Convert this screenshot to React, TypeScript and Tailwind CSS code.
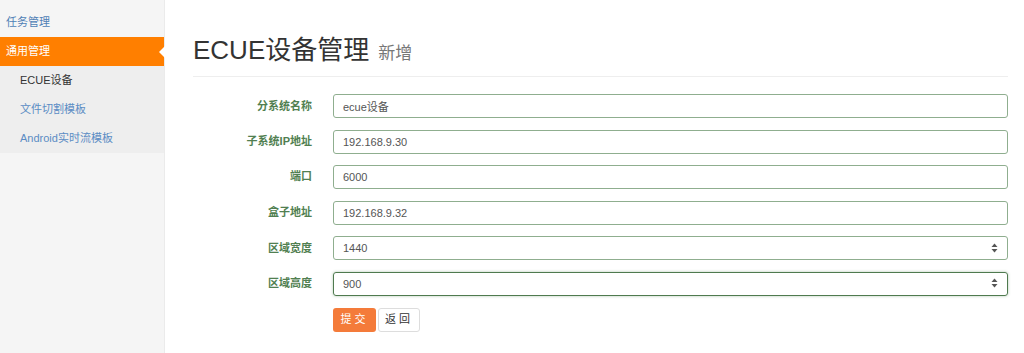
import { useState } from "react";

const font = { fontFamily: '"Liberation Sans", "Noto Sans CJK SC", sans-serif' };

type Field = { label: string; value: string; spin?: boolean; focus?: boolean };

const fields: Field[] = [
  { label: "分系统名称", value: "ecue设备" },
  { label: "子系统IP地址", value: "192.168.9.30" },
  { label: "端口", value: "6000" },
  { label: "盒子地址", value: "192.168.9.32" },
  { label: "区域宽度", value: "1440", spin: true },
  { label: "区域高度", value: "900", spin: true, focus: true },
];

function Spin() {
  return (
    <svg width="7" height="10" viewBox="0 0 7 10" className="absolute right-[10px] top-1/2 -translate-y-1/2">
      <path d="M3.5 0.5 L6.5 4 H0.5 Z" fill="#555" />
      <path d="M3.5 9.5 L6.5 6 H0.5 Z" fill="#555" />
    </svg>
  );
}

function Sidebar() {
  return (
    <aside className="w-[165px] shrink-0 bg-[#f5f5f5] border-r border-[#ebebeb] text-[11px] pt-[8px]">
      <div className="h-[29px] flex items-center pl-[6px] text-[#4f7fb5]">任务管理</div>
      <div className="relative h-[29px] flex items-center pl-[6px] bg-[#ff7f00] text-white">
        通用管理
        <span className="absolute right-[-1px] top-1/2 -translate-y-1/2 w-0 h-0 border-y-[6px] border-y-transparent border-r-[6px] border-r-white" />
      </div>
      <div className="bg-[#eeeeee]">
        <div className="h-[29px] flex items-center pl-[20px] text-[#333]">ECUE设备</div>
        <div className="h-[29px] flex items-center pl-[20px] text-[#5b8cc4]">文件切割模板</div>
        <div className="h-[29px] flex items-center pl-[20px] text-[#5b8cc4]">Android实时流模板</div>
      </div>
    </aside>
  );
}

export default function App() {
  const [vals, setVals] = useState(fields.map((f) => f.value));
  return (
    <div className="flex w-[1024px] h-[353px] bg-white overflow-hidden" style={font}>
      <Sidebar />
      <main className="flex-1 pl-[28px] pr-[16px]">
        <h1 className="mt-[34px] h-[33px] flex items-baseline text-[26px] leading-[33px] text-[#333]">
          ECUE设备管理
          <small className="ml-[9px] text-[17px] text-[#777]">新增</small>
        </h1>
        <div className="mt-[9px] border-b border-[#eee]" />
        <form className="mt-[17px] flex flex-col gap-[10.6px]">
          {fields.map((f, i) => (
            <div key={f.label} className="flex items-center">
              <label className="w-[140px] pr-[21px] text-right text-[11px] font-bold text-[#517f51]">
                {f.label}
              </label>
              <div className="relative flex-1">
                <input
                  value={vals[i]}
                  onChange={(e) => setVals(vals.map((v, j) => (j === i ? e.target.value : v)))}
                  className={
                    f.focus
                      ? "w-full h-[24px] px-[9px] rounded-[3px] border border-[#4f7a4f] text-[11px] text-[#555] outline-none shadow-[0_0_3px_rgba(60,118,61,0.4)]"
                      : "w-full h-[24px] px-[9px] rounded-[3px] border border-[#8fae8f] text-[11px] text-[#555] outline-none"
                  }
                />
                {f.spin && <Spin />}
              </div>
            </div>
          ))}
          <div className="mt-[1px] flex gap-[2px] pl-[140px]">
            <button type="button" className="w-[43px] h-[24px] rounded-[3px] bg-[#f47b3a] text-white text-[11px] tracking-[3px]">
              提交
            </button>
            <button type="button" className="w-[42px] h-[24px] rounded-[3px] bg-white border border-[#ddd] text-[#333] text-[11px] tracking-[3px]">
              返回
            </button>
          </div>
        </form>
      </main>
    </div>
  );
}
